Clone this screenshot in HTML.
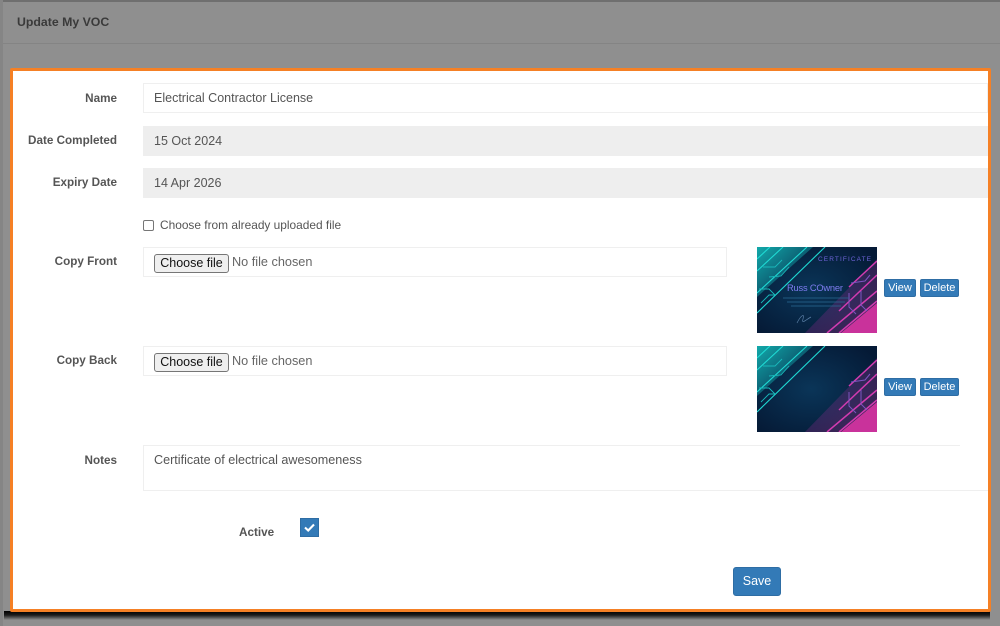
<!DOCTYPE html>
<html><head><meta charset="utf-8"><style>
html,body{margin:0;padding:0;width:1000px;height:626px;overflow:hidden;background:#8f8f8f}
*{box-sizing:border-box}
body{font-family:"Liberation Sans",sans-serif;position:relative;color:#555}
.a{position:absolute}
.lb{position:absolute;right:883px;font-weight:bold;font-size:11.7px;color:#555;white-space:nowrap}
.f{position:absolute;left:143px;border:1px solid #efefef;background:#fff;font-size:12.5px;color:#555;padding-left:10px;white-space:nowrap}
.g{background:#eee;border-color:#eee}
.b{position:absolute;background:#337ab7;border:1px solid #2e6da4;color:#fff;border-radius:2px;font-size:11px;height:18px;line-height:16px;text-align:center}
.cf{position:absolute;left:10px;top:6px;width:75px;height:19px;background:#efefef;border:1px solid #767676;border-radius:3px;color:#111;font-size:12.5px;line-height:17px;text-align:center}
.nf{position:absolute;left:88px;top:0;line-height:29px;font-size:12.7px;color:#666}
</style></head><body>
<div class="a" style="left:0;top:0;width:1000px;height:2px;background:#6f6f6f"></div>
<div class="a" style="left:0;top:0;width:3px;height:626px;background:#858585"></div>
<div class="a" style="left:3px;top:43px;width:997px;height:1px;background:#848484"></div>
<div class="a" style="left:17px;top:15px;font-weight:bold;font-size:12.3px;color:#3a3a3a">Update My VOC</div>

<div class="a" style="left:4px;top:611px;width:986px;height:9px;background:linear-gradient(#000,#1c1c1c 45%,#5a5a5a 75%,#8f8f8f)"></div>
<div class="a" style="left:10px;top:68px;width:981px;height:544px;background:#fff;border:3px solid #f58025;border-radius:2px"></div>

<div class="lb" style="top:92px">Name</div>
<div class="f" style="top:83px;width:845px;height:30px;line-height:29px">Electrical Contractor License</div>
<div class="lb" style="top:134px">Date Completed</div>
<div class="f g" style="top:126px;width:845px;height:30px;line-height:29px">15 Oct 2024</div>
<div class="lb" style="top:176px">Expiry Date</div>
<div class="f g" style="top:168px;width:845px;height:30px;line-height:29px">14 Apr 2026</div>
<div class="a" style="left:143px;top:220px;width:11px;height:11px;border:1px solid #767676;border-radius:2px;background:#fff"></div>
<div class="a" style="left:160px;top:218px;font-size:11.9px;color:#555">Choose from already uploaded file</div>

<div class="lb" style="top:255px">Copy Front</div>
<div class="f" style="top:247px;width:584px;height:30px;padding:0"><div class="cf">Choose file</div><div class="nf">No file chosen</div></div>
<div class="lb" style="top:354px">Copy Back</div>
<div class="f" style="top:346px;width:584px;height:30px;padding:0"><div class="cf">Choose file</div><div class="nf">No file chosen</div></div>

<svg class="a" style="left:757px;top:247px" width="120" height="86" viewBox="0 0 120 86">
<defs><radialGradient id="r1" cx=".45" cy=".5" r=".65"><stop offset="0" stop-color="#0a3558"/><stop offset="1" stop-color="#051a36"/></radialGradient>
<linearGradient id="c1" x1="0" y1="0" x2=".7" y2=".7"><stop offset="0" stop-color="#18e6dc"/><stop offset="1" stop-color="#0a4d66"/></linearGradient>
<linearGradient id="p1" x1="0" y1="0" x2="1" y2="1"><stop offset="0" stop-color="#4a1f7a"/><stop offset="1" stop-color="#e23aa8"/></linearGradient></defs>
<rect width="120" height="86" fill="url(#r1)"/>
<polygon points="0,0 56,0 0,50" fill="url(#c1)" opacity=".7"/>
<path d="M0 12L13 0M0 24L26 0M0 46L50 0M0 66L68 0" stroke="#1fdad4" stroke-width="1.1" fill="none"/>
<path d="M6 20h12l7-7M12 30l12-1l8-9M2 42h10l6 6M4 56l8-8h6" stroke="#19b8ba" stroke-width=".9" fill="none"/>
<polygon points="120,12 120,86 48,86" fill="url(#p1)" opacity=".28"/>
<polygon points="120,56 120,86 84,86" fill="#d1349f" opacity=".95"/>
<path d="M120 14L92 40M120 28L82 64M120 44L70 86M120 54L82 86" stroke="#d23bb0" stroke-width="1.5" fill="none"/>
<path d="M94 36l14-2l5-6M92 46v14l7 7M104 44v14l6 6" stroke="#7d54c0" stroke-width="1" fill="none"/>
<text x="61" y="14" font-family="Liberation Sans" font-size="6.5" textLength="53" fill="#6f63d8">CERTIFICATE</text>
<text x="30" y="44" font-family="Liberation Sans" font-size="9.3" textLength="56" fill="#7f7cf0">Russ COwner</text>
<path d="M26 51h66M30 55h58M34 59h50" stroke="#2a6a93" stroke-width=".8"/>
<path d="M40 76c4-8 8-10 6-4s4 0 8-2" stroke="#5a7ea5" stroke-width=".7" fill="none"/>
</svg>
<svg class="a" style="left:757px;top:346px" width="120" height="86" viewBox="0 0 120 86">
<rect width="120" height="86" fill="url(#r1)"/>
<polygon points="0,0 56,0 0,50" fill="url(#c1)" opacity=".7"/>
<path d="M0 12L13 0M0 24L26 0M0 46L50 0M0 66L68 0" stroke="#1fdad4" stroke-width="1.1" fill="none"/>
<path d="M6 20h12l7-7M12 30l12-1l8-9M2 42h10l6 6M4 56l8-8h6" stroke="#19b8ba" stroke-width=".9" fill="none"/>
<polygon points="120,12 120,86 48,86" fill="url(#p1)" opacity=".28"/>
<polygon points="120,56 120,86 84,86" fill="#d1349f" opacity=".95"/>
<path d="M120 14L92 40M120 28L82 64M120 44L70 86M120 54L82 86" stroke="#d23bb0" stroke-width="1.5" fill="none"/>
<path d="M94 36l14-2l5-6M92 46v14l7 7M104 44v14l6 6" stroke="#7d54c0" stroke-width="1" fill="none"/>
</svg>

<div class="b" style="left:884px;top:279px;width:32px">View</div>
<div class="b" style="left:920px;top:279px;width:39px">Delete</div>
<div class="b" style="left:884px;top:378px;width:32px">View</div>
<div class="b" style="left:920px;top:378px;width:39px">Delete</div>

<div class="lb" style="top:454px">Notes</div>
<div class="f" style="top:445px;width:845px;height:46px;line-height:29px;border-right:0;font-size:12.6px">Certificate of electrical awesomeness</div>
<div class="a" style="left:960px;top:444px;width:28px;height:3px;background:#fff"></div>

<div class="a" style="left:239px;top:526px;font-weight:bold;font-size:11.7px;color:#555">Active</div>
<div class="a" style="left:300px;top:518px;width:19px;height:19px;background:#337ab7;border:1px solid #2e6da4">
<svg width="17" height="17" viewBox="0 0 17 17" style="display:block"><path d="M4 8.5l3.2 3l5.8-6" stroke="#fff" stroke-width="2.1" fill="none"/></svg></div>
<div class="b" style="left:733px;top:567px;width:48px;height:29px;line-height:27px;font-size:12.5px;border-radius:3px">Save</div>
</body></html>
